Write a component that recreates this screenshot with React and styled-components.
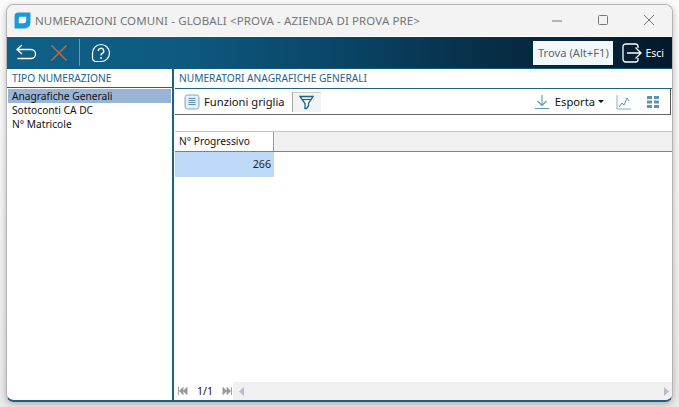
import React from "react";
import styled, { createGlobalStyle } from "styled-components";

const Global = createGlobalStyle`
  html, body { margin: 0; padding: 0; background: #f4f4f4; }
  body { width: 679px; height: 407px; overflow: hidden; font-family: "Noto Sans", "Liberation Sans", sans-serif; }
`;
const Page = styled.div`
  box-sizing: border-box;
  width: 679px;
  height: 407px;
  padding: 4px 6px 5px 6px;
  background: linear-gradient(#fbfbfb, #e9e9e9);
`;
const Win = styled.div`
  box-sizing: border-box;
  height: 398px;
  display: flex;
  flex-direction: column;
  border: 1px solid #b4b4b4;
  border-bottom: 2px solid #1c5f80;
  border-radius: 8px;
  overflow: hidden;
  background: #fff;
  box-shadow: 0 2px 6px rgba(0, 0, 0, 0.25);
`;
const TitleBar = styled.div`
  height: 31px;
  flex: none;
  display: flex;
  align-items: center;
  background: #f3f3f3;
  padding-left: 7px;
  border-bottom: 1px solid #fff;
`;
const AppLogo = styled.svg`
  width: 17px;
  height: 17px;
  flex: none;
  margin-right: 4px;
`;
const TitleText = styled.span`
  font-size: 11.5px;
  color: #757575;
  white-space: nowrap;
  flex: 1;
  letter-spacing: 0.01em;
`;
const WinBtn = styled.svg`
  width: 46px;
  height: 31px;
  flex: none;
`;
const Toolbar = styled.div`
  height: 31px;
  flex: none;
  display: flex;
  align-items: center;
  background: linear-gradient(90deg, #0f6088 0%, #0e5a80 25%, #0a4566 50%, #072e47 72%, #04192b 100%);
  border-bottom: 1px solid #0f5b7d;
`;
const ToolIcon = styled.svg`
  flex: none;
  display: block;
`;
const ToolSep = styled.div`
  width: 1px;
  height: 27px;
  background: #6d97ad;
  margin: 0 11px 0 11px;
`;
const Spacer = styled.div`
  flex: 1;
`;
const Find = styled.div`
  width: 80px;
  height: 24px;
  flex: none;
  box-sizing: border-box;
  background: #f2f9fe;
  color: #5e6468;
  font-size: 11.2px;
  line-height: 24px;
  text-align: center;
  white-space: nowrap;
`;
const Exit = styled.div`
  display: flex;
  align-items: center;
  gap: 3px;
  color: #fff;
  font-size: 10.5px;
  margin: 0 8px 0 9px;
`;
const Body = styled.div`
  flex: 1;
  display: flex;
  min-height: 0;
`;
const Left = styled.div`
  width: 165px;
  flex: none;
  display: flex;
  flex-direction: column;
  border-right: 2px solid #1b6485;
`;
const Right = styled.div`
  flex: 1;
  min-width: 0;
  display: flex;
  flex-direction: column;
  padding-left: 1px;
`;
const PanelHead = styled.div`
  height: ${(p) => p.$h}px;
  flex: none;
  box-sizing: border-box;
  padding-left: ${(p) => p.$pad}px;
  font-size: 10.2px;
  line-height: 19px;
  color: #1d6387;
  white-space: nowrap;
  border-bottom: 1px solid #1b6485;
`;
const List = styled.div`
  padding: 1px 1px 0 1px;
`;
const Item = styled.div`
  height: 14px;
  line-height: 14px;
  font-size: 10.2px;
  padding-left: 4px;
  color: #111;
  white-space: nowrap;
  background: ${(p) => (p.$on ? "#98b4d6" : "transparent")};
`;
const GridBar = styled.div`
  height: 26px;
  flex: none;
  box-sizing: border-box;
  display: flex;
  align-items: center;
  padding-left: 9px;
  border-right: 1px solid #555;
  border-bottom: 1px solid #666;
  margin-right: 1px;
`;
const BarLabel = styled.span`
  font-size: 11.2px;
  color: #111;
  white-space: nowrap;
  margin-left: ${(p) => p.$gap}px;
`;
const FilterBtn = styled.div`
  width: 29px;
  height: 20px;
  box-sizing: border-box;
  display: flex;
  align-items: center;
  justify-content: center;
  margin-left: 7px;
  border-left: 1px solid #aaa;
  border-top: 1px solid #ccc;
  background: #f3f3f3;
`;
const Caret = styled.span`
  width: 0;
  height: 0;
  border-left: 3px solid transparent;
  border-right: 3px solid transparent;
  border-top: 3px solid #111;
  margin: 0 12px 0 3px;
`;
const GridHead = styled.div`
  margin-top: 16px;
  height: 21px;
  flex: none;
  box-sizing: border-box;
  display: flex;
  border-top: 1px solid #b9c8d2;
  border-bottom: 1px solid #5d8ba5;
  background: #f0f0f0;
`;
const HeadCell = styled.div`
  width: 99px;
  flex: none;
  background: #fff;
  border-right: 1px solid #9a9a9a;
  font-size: 10.2px;
  line-height: 19px;
  padding-left: 4px;
  box-sizing: border-box;
  color: #111;
  white-space: nowrap;
`;
const Row = styled.div`
  height: 25px;
  width: 99px;
  flex: none;
  background: #bddaf8;
  font-size: 10.7px;
  line-height: 24px;
  text-align: right;
  padding-right: 3px;
  box-sizing: border-box;
  color: #222;
`;
const Footer = styled.div`
  margin-top: auto;
  height: 18px;
  flex: none;
  display: flex;
  align-items: center;
`;
const Pager = styled.div`
  width: 58px;
  flex: none;
  display: flex;
  align-items: center;
  box-sizing: border-box;
  padding-left: 3px;
  font-size: 10.5px;
  color: #111;
`;
const PageNum = styled.span`
  margin: 0 9px;
`;
const Scroll = styled.div`
  flex: 1;
  height: 100%;
  display: flex;
  align-items: center;
  justify-content: space-between;
  padding: 0 3px 0 6px;
  background: #f0f0f0;
`;

const Skip = ({ flip }) => (
  <svg width="10" height="8" viewBox="0 0 10 8" style={{ flex: "none", transform: flip ? "scaleX(-1)" : undefined }}>
    <path d="M0.5 0v8M5 0.5 1.5 4 5 7.5zM9 0.5 5.5 4 9 7.5z" fill="#9a9a9a" stroke="#8a8a8a" strokeWidth="0.8" />
  </svg>
);

export default function App() {
  return (
    <Page>
      <Global />
      <Win>
        <TitleBar>
          <AppLogo viewBox="0 0 16 16">
            <path d="M4 .5h11.500v9.500a5.500 5.500 0 0 1-5.500 5.500H.5V4A3.500 3.500 0 0 1 4 .5z" fill="#1a9ad6" />
            <path d="M6 4.500h5.500V8A2.500 2.500 0 0 1 9 10.500H4.500V6A1.500 1.500 0 0 1 6 4.500z" fill="#f2f8fc" />
          </AppLogo>
          <TitleText>NUMERAZIONI COMUNI - GLOBALI &lt;PROVA - AZIENDA DI PROVA PRE&gt;</TitleText>
          <WinBtn viewBox="0 0 46 31">
            <path d="M18 16h10" stroke="#777" fill="none" />
          </WinBtn>
          <WinBtn viewBox="0 0 46 31">
            <rect x="18.5" y="10.5" width="9" height="9" rx="1" stroke="#777" fill="none" />
          </WinBtn>
          <WinBtn viewBox="0 0 46 31">
            <path d="M18 10l10 10M28 10 18 20" stroke="#777" fill="none" />
          </WinBtn>
        </TitleBar>
        <Toolbar>
          <ToolIcon width="22" height="22" viewBox="0 0 22 22" style={{ marginLeft: 8 }}>
            <path d="M7 3 2 7.500 7 12M2.500 7.500h13.500a4.500 4.500 0 0 1 0 9H2.500" stroke="#fff" strokeWidth="1.300" fill="none" />
          </ToolIcon>
          <ToolIcon width="18" height="18" viewBox="0 0 18 18" style={{ marginLeft: 13 }}>
            <path d="M1.500 1.500l15 15M16.500 1.500l-15 15" stroke="#c9693f" strokeWidth="1.400" fill="none" />
          </ToolIcon>
          <ToolSep />
          <ToolIcon width="20" height="20" viewBox="0 0 20 20">
            <path d="M10 1.500a8.500 8.500 0 0 1 8.500 8.500c0 5-4 8.500-8.500 8.500H5a3.500 3.500 0 0 1-3.500-3.500V10A8.500 8.500 0 0 1 10 1.500z" stroke="#fff" strokeWidth="1.200" fill="none" />
            <path d="M7.300 8a2.700 2.700 0 1 1 4 2.400c-.9.500-1.300 1-1.300 2" stroke="#fff" strokeWidth="1.400" fill="none" />
            <circle cx="10" cy="15" r="0.900" fill="#fff" />
          </ToolIcon>
          <Spacer />
          <Find>Trova (Alt+F1)</Find>
          <Exit>
            <ToolIcon width="20" height="20" viewBox="0 0 20 20">
              <path d="M16 5V3.500A2.500 2.500 0 0 0 13.500 1H4a3 3 0 0 0-3 3v12a3 3 0 0 0 3 3h9.500a2.500 2.500 0 0 0 2.500-2.500V15" stroke="#fff" strokeWidth="1.300" fill="none" />
              <path d="M5 10h14M13.500 4.500 19 10l-5.500 5.500" stroke="#fff" strokeWidth="1.300" fill="none" />
            </ToolIcon>
            Esci
          </Exit>
        </Toolbar>
        <Body>
          <Left>
            <PanelHead $pad={5} $h={19}>TIPO NUMERAZIONE</PanelHead>
            <List>
              <Item $on>Anagrafiche Generali</Item>
              <Item>Sottoconti CA DC</Item>
              <Item>N° Matricole</Item>
            </List>
          </Left>
          <Right>
            <PanelHead $pad={4} $h={20}>NUMERATORI ANAGRAFICHE GENERALI</PanelHead>
            <GridBar>
              <svg width="16" height="16" viewBox="0 0 16 16" style={{ flex: "none" }}>
                <rect x="1" y="1" width="14" height="14" rx="2.500" fill="#e6eff5" stroke="#7da8c0" />
                <path d="M4.500 4.500h7M4.500 6.500h7M4.500 8.500h7M4.500 10.500h7" stroke="#5e8ea8" />
              </svg>
              <BarLabel $gap={4}>Funzioni griglia</BarLabel>
              <FilterBtn>
                <svg width="15" height="15" viewBox="0 0 15 15">
                  <path d="M1 1.500h13L9.500 8.500v2.500L7.500 13.500h-1.500V8.500z" fill="none" stroke="#14668c" strokeWidth="1.300" />
                  <path d="M3 4.500h9" stroke="#14668c" />
                </svg>
              </FilterBtn>
              <Spacer />
              <svg width="16" height="16" viewBox="0 0 16 16" style={{ flex: "none" }}>
                <path d="M8 1v10M3.500 7 8 11.500 12.500 7M1 14.500h14" fill="none" stroke="#5b94b4" strokeWidth="1.100" />
              </svg>
              <BarLabel $gap={5}>Esporta</BarLabel>
              <Caret />
              <svg width="16" height="16" viewBox="0 0 16 16" style={{ flex: "none" }}>
                <path d="M1 1v14h14" fill="none" stroke="#7fb0ca" />
                <path d="M3 13l3-4 2 2 3-7 2 3" fill="none" stroke="#5b94b4" />
              </svg>
              <svg width="14" height="14" viewBox="0 0 14 14" style={{ flex: "none", margin: "0 10px 0 14px" }}>
                <path d="M1 1h5v3H1zM8 1h5v3H8zM1 5.500h5v3H1zM8 5.500h5v3H8zM1 10h5v3H1zM8 10h5v3H8z" fill="#5b94b4" />
              </svg>
            </GridBar>
            <GridHead>
              <HeadCell>N° Progressivo</HeadCell>
            </GridHead>
            <Row>266</Row>
            <Footer>
              <Pager>
                <Skip />
                <PageNum>1/1</PageNum>
                <Skip flip />
              </Pager>
              <Scroll>
                <svg width="5" height="9" viewBox="0 0 5 9"><path d="M5 0v9L0 4.500z" fill="#b6bcc8" /></svg>
                <svg width="5" height="9" viewBox="0 0 5 9"><path d="M0 0v9l5-4.500z" fill="#b6bcc8" /></svg>
              </Scroll>
            </Footer>
          </Right>
        </Body>
      </Win>
    </Page>
  );
}
